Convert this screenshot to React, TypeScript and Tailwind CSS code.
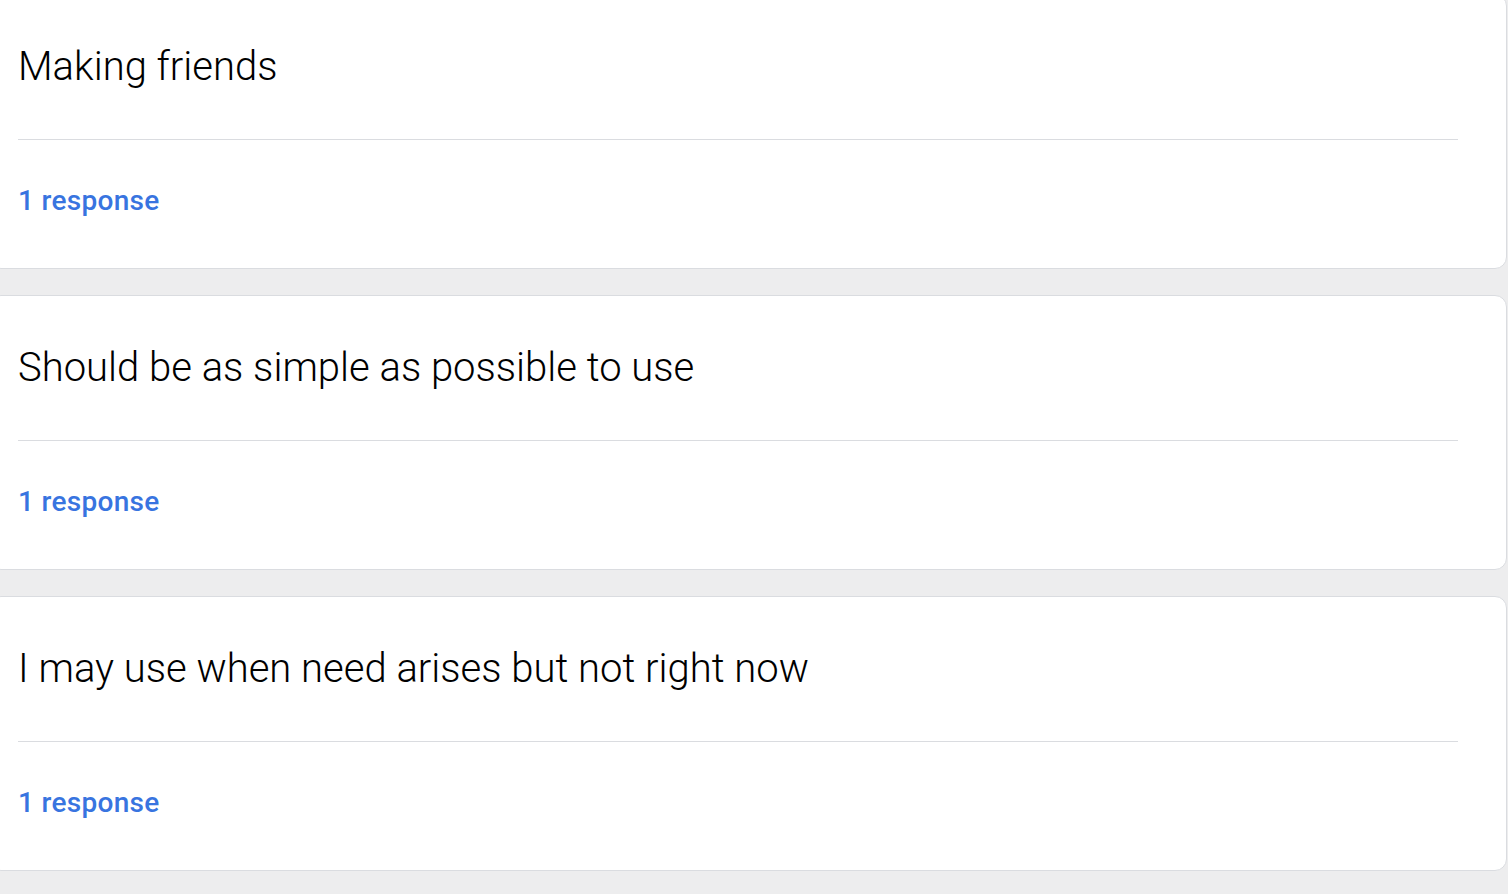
import React from 'react';

const answers = [
    'Making friends',
    'Should be as simple as possible to use',
    'I may use when need arises but not right now',
];

// one answer card with its response count
const AnswerCard: React.FC<{ text: string }> = ({ text }) => (
    <div className="w-[1518px] -ml-[11px] h-[275px] bg-white border border-[#dadce0] rounded-[12px] flex flex-col pl-[28px] pr-[48px]">
        <div className="h-[144px] flex items-center">
            <p className="text-[40px] leading-none font-light text-[#000] font-['Roboto',sans-serif]">{text}</p>
        </div>
        <div className="h-px bg-[#dadce0]" />
        <div className="h-[121px] flex items-center">
            <span className="text-[28px] leading-none font-medium tracking-[0.3px] text-[#3874e0] font-['Roboto',sans-serif]">1 response</span>
        </div>
    </div>
);

export default function App() {
    return (
        <div className="min-h-[894px] w-full bg-[#ededee] overflow-hidden">
            <div className="-mt-[6px] flex flex-col gap-[26px]">
                {answers.map((a) => (
                    <AnswerCard key={a} text={a} />
                ))}
            </div>
        </div>
    );
}
